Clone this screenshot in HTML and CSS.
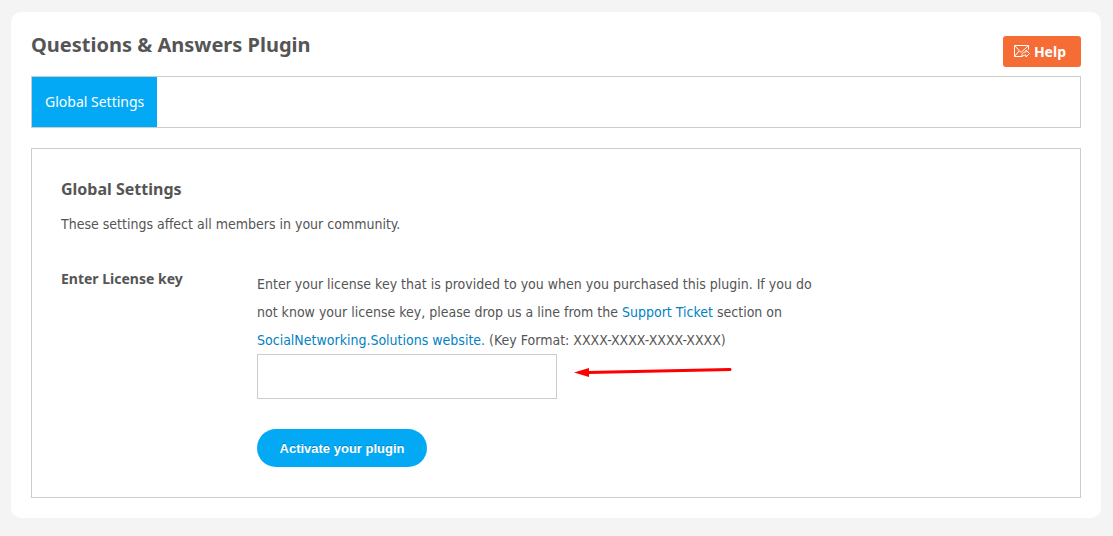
FILE: index.html
```html
<!DOCTYPE html>
<html lang="en">
<head>
<meta charset="utf-8">
<title>Questions &amp; Answers Plugin</title>
<link rel="stylesheet" href="styles.css">
</head>
<body>
<main class="card">
  <header class="header">
    <h1 class="title">Questions &amp; Answers Plugin</h1>
    <a class="help" href="#help">
      <svg class="help-icon" viewBox="0 0 16 13" width="16" height="13" fill="none" stroke="currentColor" aria-hidden="true">
        <path d="M8 11.500H.5V.5h14v4M.5.5L7 7.500L14.500.5M.5 11.500L5 6"/>
        <path d="M8 9.500c1-2 2-2.500 4-2.500V5l3.500 3.500L12 12v-2c-2 0-2.500.5-4 1.500z"/>
      </svg>
      Help
    </a>
  </header>
  <nav class="tabs">
    <a class="tab" href="#global">Global Settings</a>
  </nav>
  <form class="panel">
    <h2 class="panel-title">Global Settings</h2>
    <p class="intro">These settings affect all members in your community.</p>
    <div class="row">
      <label class="label" for="license">Enter License key</label>
      <div class="field">
        <p class="description">Enter your license key that is provided to you when you purchased this plugin. If you do not know your license key, please drop us a line from the <a href="#support">Support Ticket</a> section on <a href="#site">SocialNetworking.Solutions website.</a> (Key Format: XXXX-XXXX-XXXX-XXXX)</p>
        <div class="entry">
          <input class="input" id="license" type="text">
          <svg class="arrow" viewBox="0 0 160 12" width="160" height="12" aria-hidden="true">
            <path d="M14 6.500L156 3.500" stroke="#f00" stroke-width="3" stroke-linecap="round"/>
            <path d="M0 6.500L15 2v9z" fill="#f00"/>
          </svg>
        </div>
        <button class="submit" type="button">Activate your plugin</button>
      </div>
    </div>
  </form>
</main>
</body>
</html>
```
FILE: styles.css
```css
* {
  box-sizing: border-box;
}

body {
  margin: 0;
  padding: 12px 12px 18px 11px;
  background: #f4f4f4;
  color: #555;
  font: 14px/28px Tahoma, "DejaVu Sans Condensed", sans-serif;
}

h1, h2, p {
  margin: 0;
}

a {
  color: #0082c3;
  text-decoration: none;
}

.title, .help, .tab, .panel-title, .label {
  font-family: Tahoma, "Noto Sans", sans-serif;
}

.card {
  padding: 20px;
  border-radius: 10px;
  background: #fff;
}

.header {
  display: flex;
  justify-content: space-between;
  align-items: flex-start;
  height: 44px;
}

.title {
  font-size: 20px;
  line-height: 26px;
}

.help {
  display: flex;
  align-items: center;
  gap: 4px;
  height: 31px;
  margin-top: 4px;
  padding: 0 15px 0 11px;
  border-radius: 3px;
  background: #f56c35;
  color: #fff;
  font-weight: bold;
}

.tabs {
  display: flex;
  border: 1px solid #ccc;
}

.tab {
  padding: 0 13px;
  background: #03a9f4;
  color: #fff;
  font-size: 14px;
  line-height: 50px;
}

.panel {
  margin-top: 20px;
  padding: 26px 29px 30px;
  border: 1px solid #ccc;
}

.panel-title {
  font-size: 16px;
  line-height: 28px;
}

.intro {
  margin-top: 7px;
}

.row {
  display: flex;
  margin-top: 27px;
}

.label {
  flex: 0 0 196px;
  font-weight: bold;
}

.field {
  flex: 1;
  padding-top: 5px;
}

.description {
  max-width: 560px;
}

.entry {
  display: flex;
  gap: 17px;
}

.input {
  width: 300px;
  height: 45px;
  padding: 0 10px;
  border: 1px solid #ccc;
  background: #fff;
  font: inherit;
}

.arrow {
  margin-top: 12px;
}

.submit {
  display: block;
  min-width: 170px;
  height: 38px;
  margin-top: 30px;
  padding: 0 20px;
  border: 0;
  border-radius: 19px;
  background: #03a9f4;
  color: #fff;
  font: bold 13px "Liberation Sans", Arial, sans-serif;
  text-shadow: 0 -1px 0 rgba(0, 0, 0, 0.25);
}
```
